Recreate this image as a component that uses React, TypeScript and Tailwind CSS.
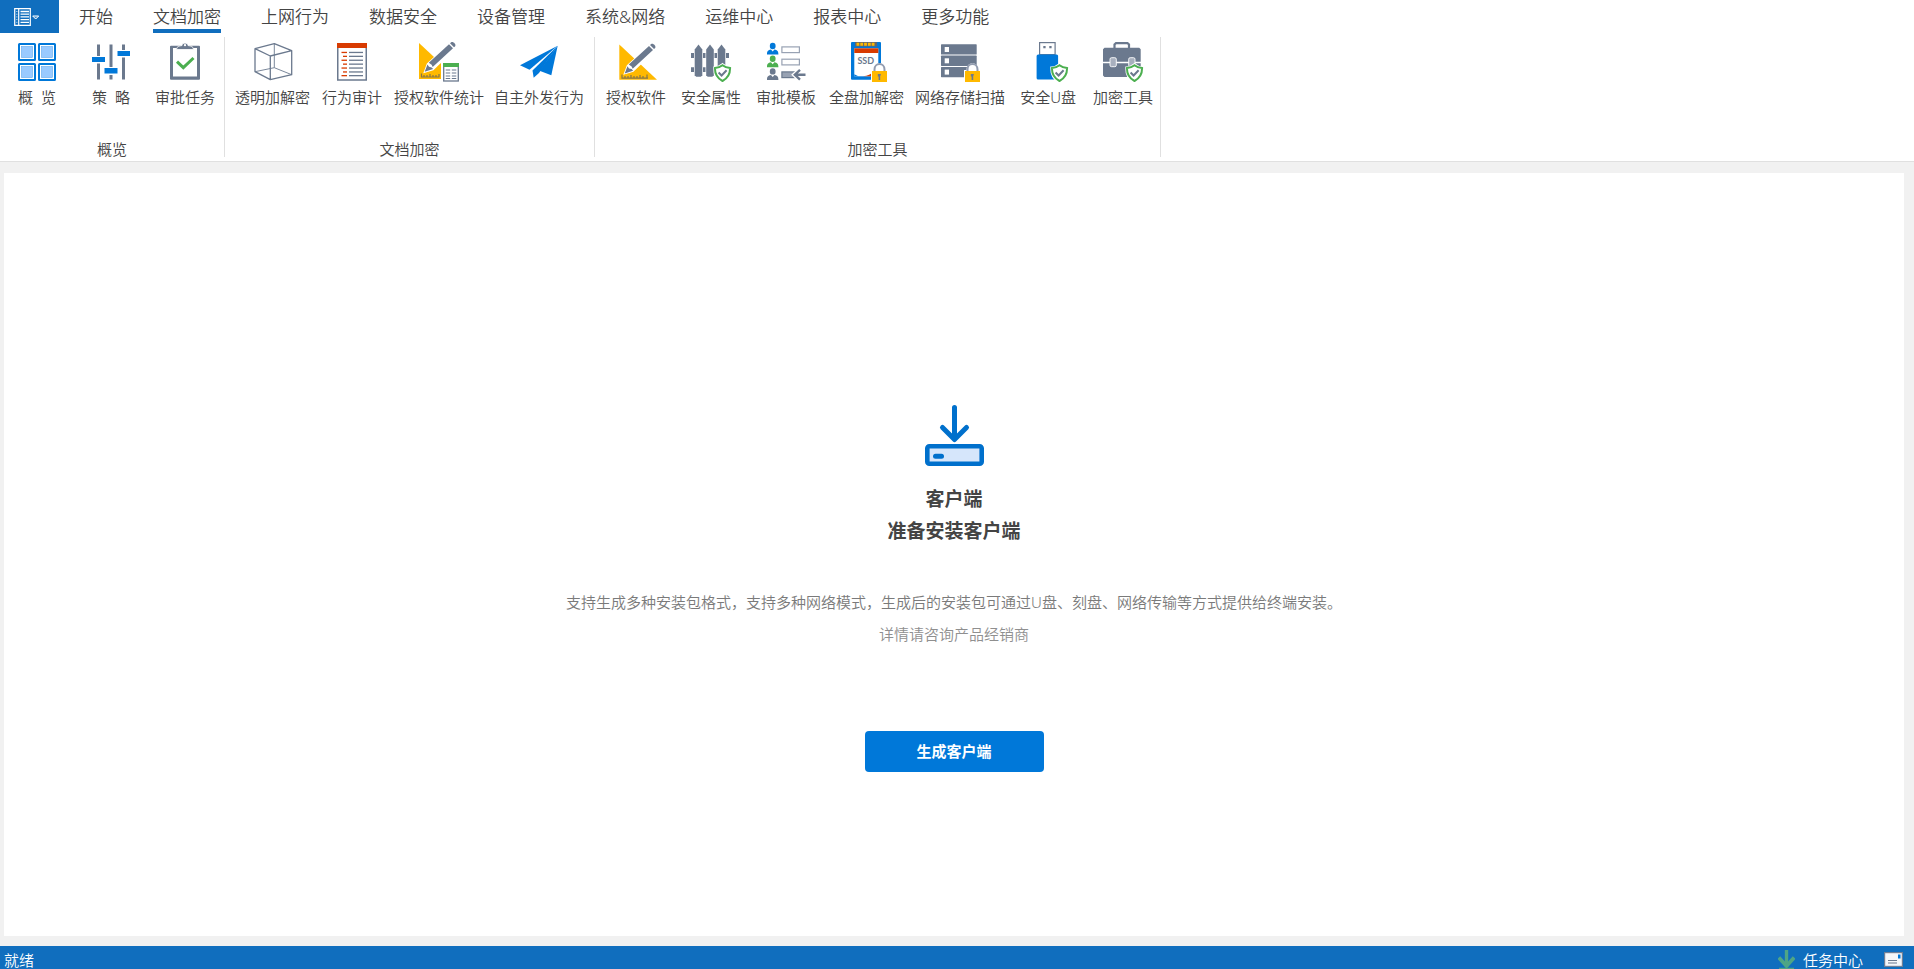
import type { ReactNode } from 'react';

const SLATE = '#6b798e';
const BLUE = '#0078d9';
const GREEN = '#4caf50';
const YELLOW = '#ffb900';
const RED = '#d83b01';

function Icon({ children }: { children: ReactNode }) {
  return (
    <svg viewBox="0 0 40 40" className="h-10 w-10 overflow-visible" aria-hidden="true">
      {children}
    </svg>
  );
}

function ShieldBadge() {
  return (
    <g>
      <path d="M31.5 22.5c2.4 2.1 4.9 3 8 3.2.2 6.500-1.700 11.200-8 14.300-6.300-3.100-8.200-7.800-8-14.300 3.100-.2 5.600-1.100 8-3.200z" fill="#fff" stroke="#fff" strokeWidth="2.500" />
      <path d="M31.5 23.200c2.300 1.800 4.600 2.600 7.600 2.900 0 5.900-1.900 10.100-7.600 12.900-5.700-2.800-7.600-7-7.600-12.900 3-.3 5.300-1.100 7.600-2.900z" fill="#fff" stroke={GREEN} strokeWidth="2" />
      <path d="M27.600 30.500l3 3 5-5.200" fill="none" stroke={SLATE} strokeWidth="2" />
    </g>
  );
}

function LockBadge() {
  return (
    <g>
      <path d="M24 41V28h2.500c0-9 12-9 12 0H41v13z" fill="#fff" />
      <path d="M27.500 29v-1.500c0-7.300 10-7.300 10 0V29" fill="none" stroke="#929caf" strokeWidth="2" />
      <rect x="25" y="29" width="15" height="11" fill={YELLOW} />
      <path d="M30.800 32h3v1.500h-.6V38h-1.600v-3.500h-.8z" fill={SLATE} />
    </g>
  );
}

function Pencil() {
  return (
    <g>
      <path d="M5.500 30l3-8L33 -.5l5 4.800L14 27.500z" fill="#fff" stroke="#fff" strokeWidth="1.500" />
      <path d="M5.700 29.700l2.800-7.200 1.500 2.300 2.600.6 1.500 1.600z" fill={SLATE} />
      <path d="M9.800 20.800L30 2.200l4 4.100-20.300 18.800-1.100-2.400z" fill={SLATE} />
      <path d="M31 1.300l1.200-1c1.900-1 5.100 1.900 4 4l-1.200 1z" fill={SLATE} />
    </g>
  );
}

function OverviewIcon() {
  return (
    <Icon>
      {[1, 21].map((y) =>
        [1, 21].map((x) => (
          <g key={`${x}-${y}`}>
            <rect x={x + 1} y={y + 1} width="16" height="16" rx=".5" fill="#fff" stroke={BLUE} strokeWidth="2" />
            <rect x={x + 3.500} y={y + 3.500} width="11" height="11" fill="#99caff" stroke="#60abed" strokeWidth=".6" />
          </g>
        )),
      )}
    </Icon>
  );
}

function PolicyIcon() {
  return (
    <Icon>
      <path
        d="M6 2.500h3V14H6zM6 21.500h3v16H6zM18.500 2.500h3V25h-3zM18.500 33h3v4.500h-3zM31 2.500h3V8h-3zM31 15.500h3v22h-3z"
        fill={SLATE}
      />
      <g fill={BLUE}>
        <rect x="1" y="15" width="13" height="5" />
        <rect x="13.500" y="26" width="13" height="5.500" />
        <rect x="26.500" y="9" width="12.500" height="5" />
      </g>
    </Icon>
  );
}

function ApprovalIcon() {
  return (
    <Icon>
      <path fillRule="evenodd" d="M6 3.700h28a1 1 0 011 1v32a1 1 0 01-1 1H6a1 1 0 01-1-1v-32a1 1 0 011-1zM8 6v28.500h24V6z" fill={SLATE} />
      <path d="M11.500 7.500c0-3 2.500-3.500 5.500-4 .5-3.200 5.500-3.200 6 0 3 .5 5.500 1 5.500 4z" fill={SLATE} stroke="#fff" strokeWidth=".8" />
      <circle cx="20" cy="3.200" r="1.100" fill="#fff" />
      <path d="M12 19.700l6.300 6L28.500 16" fill="none" stroke={GREEN} strokeWidth="3" />
    </Icon>
  );
}

function CubeIcon() {
  return (
    <Icon>
      <g fill="none" stroke={SLATE} strokeWidth="1.300" strokeLinejoin="round">
        <path d="M2 6.700l19.300-5 17.400 7-21.400 5.300zM2 6.700v23l15.300 8 21.400-5v-24M17.300 14v23.700" />
        <path d="M21.300 1.700v24M2 29.700l19.300-4 17.400 7" strokeWidth=".9" />
      </g>
    </Icon>
  );
}

function AuditIcon() {
  return (
    <Icon>
      <rect x="5.750" y="2" width="28.500" height="36" fill="#fff" stroke={SLATE} strokeWidth="1.500" />
      <rect x="5" y="1" width="30" height="5" fill={RED} />
      {[10.300, 14.200, 18.100, 22, 25.900, 29.800, 33.500].map((y, i) => (
        <g key={y}>
          <rect x={i % 2 ? 11 : 9.500} y={y - 0.500} width={i % 2 ? 4 : 5.500} height="1.300" fill={RED} />
          <rect x="17" y={y - 0.500} width="14" height="1.300" fill={SLATE} />
        </g>
      ))}
    </Icon>
  );
}

function SoftwareStatsIcon() {
  return (
    <Icon>
      <path d="M0 1l22 20.500V37H0z" fill={YELLOW} />
      <path d="M2.500 31.500v3.500h18M5 33v2M8 33v2M11 32v3M14 33v2M17 33v2M20 32v3" fill="none" stroke="#857649" strokeWidth="1.200" />
      <Pencil />
      <rect x="23" y="20" width="18" height="21" fill="#fff" />
      <rect x="24.700" y="22" width="14.600" height="17" fill="#fff" stroke={SLATE} strokeWidth="1.300" />
      <rect x="24" y="21" width="16" height="4" fill={GREEN} />
      <path d="M26.700 28h4.500M26.700 31h4.500M26.700 34h4.500M26.700 36.500h4.500M32.800 28h4.500M32.800 31h4.500M32.800 34h4.500M32.800 36.500h4.500" stroke={SLATE} strokeWidth="1.100" />
    </Icon>
  );
}

function PlaneIcon() {
  return (
    <Icon>
      <path d="M38.700 3.700L1 23.300l9.500 4.400z" fill={BLUE} />
      <path d="M38.700 3.700L13.500 28.500 14.700 35.700 20 31z" fill={BLUE} />
      <path d="M38.700 3.700L20.500 28.800l11.800 4.500z" fill={BLUE} />
    </Icon>
  );
}

function SoftwareIcon() {
  return (
    <Icon>
      <path d="M3.300 2.500L41 37.700H3.300z" fill={YELLOW} />
      <path d="M6 32.500v3.700h26M9 34v2M12 34v2M15 33v3M18 34v2M21 34v2M24 33v3M27 34v2M31 32.500v3.500" fill="none" stroke="#857649" strokeWidth="1.200" />
      <g transform="translate(3 1.700)">
        <Pencil />
      </g>
    </Icon>
  );
}

function FenceIcon() {
  return (
    <Icon>
      <path d="M0 11h38v5H0zM0 25.300h38v4.700H0z" fill={SLATE} />
      {[3.700, 15.200, 26.700].map((x) => (
        <path
          key={x}
          d={`M${x} 33.200V7.500L${x + 3.800} 2.600L${x + 7.600} 7.500V33.200L${x + 6.100} 34.700H${x + 1.500}Z`}
          fill={SLATE}
          stroke="#fff"
          strokeWidth="1.400"
          paintOrder="stroke"
        />
      ))}
      <ShieldBadge />
    </Icon>
  );
}

function TemplateIcon() {
  return (
    <Icon>
      {[BLUE, GREEN, SLATE].map((color, i) => (
        <g key={color} fill={color} transform={`translate(0 ${i * 12.700})`}>
          <ellipse cx="6.700" cy="4" rx="2.900" ry="3.200" />
          <path d="M1 12.500c0-3.500 1-4.500 4-5l1.700 2 1.700-2c3 .5 4 1.500 4 5z" />
        </g>
      ))}
      <rect x="15.900" y="4.900" width="17.500" height="5.700" fill="#fff" stroke="#98a2b3" strokeWidth="1.200" />
      <rect x="15.900" y="17.200" width="17.500" height="5.700" fill="#fff" stroke="#98a2b3" strokeWidth="1.200" />
      <rect x="15.900" y="29.900" width="17.500" height="5.700" fill="#98a2b3" stroke={SLATE} strokeWidth="1.200" />
      <path d="M40 32.700H29M34.300 27.500l-5.500 5.200 5.500 5.200" fill="none" stroke="#fff" strokeWidth="5" />
      <path d="M39.500 32.700H29M34 27.800l-5.200 4.900 5.200 4.900" fill="none" stroke={SLATE} strokeWidth="2.400" />
    </Icon>
  );
}

function SsdIcon() {
  return (
    <Icon>
      <rect x="4" y="0" width="30" height="37.700" rx="1" fill={BLUE} />
      <rect x="8" y="0" width="22" height="4.500" fill="#5f6672" />
      <path d="M9.500 .8h2.800v3H9.500zM13.300 .8h2.800v3h-2.800zM17.100 .8h2.800v3h-2.800zM20.900 .8h2.800v3h-2.800zM24.700 .8h2.800v3h-2.800z" fill={YELLOW} />
      <rect x="7.300" y="6.300" width="24" height="28" fill="#fff" />
      <rect x="7.300" y="6.300" width="24" height="4.700" fill={RED} />
      <path d="M16 34.300c5-.5 8-2 10-4.300v4.300z" fill={RED} />
      <path d="M7.300 34.300v-2l4 2z" fill={BLUE} />
      <text x="18.800" y="21.700" textAnchor="middle" fontSize="9" fontWeight="700" fontFamily="Lato, sans-serif" fill={SLATE}>
        SSD
      </text>
      <LockBadge />
    </Icon>
  );
}

function StorageIcon() {
  return (
    <Icon>
      {[2.300, 13.600, 24.900].map((y) => (
        <g key={y}>
          <rect x="1" y={y} width="35.700" height="10.300" rx=".6" fill={SLATE} />
          <rect x="4.700" y={y + 2.700} width="4.300" height="5" fill="#fff" />
        </g>
      ))}
      <LockBadge />
    </Icon>
  );
}

function UsbIcon() {
  return (
    <Icon>
      <rect x="11.600" y=".6" width="15.500" height="12" fill="#fff" stroke={SLATE} strokeWidth="1.200" />
      <path d="M15.300 4h2.300v2.300h-2.300zM21.300 4h2.300v2.300h-2.300z" fill={SLATE} />
      <rect x="8.600" y="12.500" width="21.500" height="25" rx="1.500" fill={BLUE} />
      <ShieldBadge />
    </Icon>
  );
}

function ToolboxIcon() {
  return (
    <Icon>
      <path d="M11.500 6V2.500L13 1.200h11.500L26 2.500V6" fill="none" stroke={SLATE} strokeWidth="2.200" />
      <path d="M1.500 5.700h34.700l1.500 1.500v12.600H0V7.200zM0 21.200h37.700v12.300L36.200 35H1.500L0 33.500z" fill={SLATE} />
      <rect x="7" y="15.700" width="6.300" height="9" rx="1.500" fill="#a8b0be" stroke="#fff" strokeWidth=".9" />
      <rect x="25.700" y="15.700" width="6.300" height="9" rx="1.500" fill="#a8b0be" stroke="#fff" strokeWidth=".9" />
      <ShieldBadge />
    </Icon>
  );
}

function InstallIcon() {
  return (
    <svg viewBox="0 0 59 61" className="h-[61px] w-[59px]" aria-hidden="true">
      <g fill="none" stroke="#0070cc" strokeLinecap="round" strokeLinejoin="round">
        <path d="M29.500 2.500V34M17.500 22.500l12 12 12-12" strokeWidth="5" />
        <rect x="2.300" y="41.300" width="54.400" height="17.400" rx="2" fill="#d6e6fb" strokeWidth="4.600" />
        <path d="M10.500 51.300h6" strokeWidth="5" />
      </g>
    </svg>
  );
}

const tabs = ['开始', '文档加密', '上网行为', '数据安全', '设备管理', '系统&网络', '运维中心', '报表中心', '更多功能'];

const groups = [
  {
    title: '概览',
    className: 'pr-[2px]',
    items: [
      { label: '概  览', icon: <OverviewIcon /> },
      { label: '策  略', icon: <PolicyIcon /> },
      { label: '审批任务', icon: <ApprovalIcon /> },
    ],
  },
  {
    title: '文档加密',
    className: 'px-[5px]',
    items: [
      { label: '透明加解密', icon: <CubeIcon /> },
      { label: '行为审计', icon: <AuditIcon /> },
      { label: '授权软件统计', icon: <SoftwareStatsIcon /> },
      { label: '自主外发行为', icon: <PlaneIcon /> },
    ],
  },
  {
    title: '加密工具',
    className: 'gap-px pl-1',
    items: [
      { label: '授权软件', icon: <SoftwareIcon /> },
      { label: '安全属性', icon: <FenceIcon /> },
      { label: '审批模板', icon: <TemplateIcon /> },
      { label: '全盘加解密', icon: <SsdIcon /> },
      { label: '网络存储扫描', icon: <StorageIcon /> },
      { label: '安全U盘', icon: <UsbIcon /> },
      { label: '加密工具', icon: <ToolboxIcon /> },
    ],
  },
];

function TabBar() {
  return (
    <div className="flex h-[33px] bg-white">
      <button type="button" aria-label="菜单" className="flex w-[59px] items-center bg-[#106ebe] pl-[14px]">
        <svg viewBox="0 0 26 18" className="h-[18px] w-[26px]" fill="none" aria-hidden="true">
          <path d="M.7 .7h15.600v16.600H.7zM4.700 .7v16.600" stroke="#fff" strokeWidth="1.200" />
          <path d="M6.500 3.500h8.500M6.500 6.200h8.500M6.500 8.900h8.500M6.500 11.600h8.500M6.500 14.300h8.500" stroke="#fff" strokeWidth="1.300" />
          <path d="M2 3.500h1.500M2 6.200h1.500M2 8.900h1.500M2 11.600h1.500M2 14.300h1.500" stroke="#9cc4e6" strokeWidth="1" />
          <path d="M18.700 8h6l-3 3z" fill="#3f8bcb" stroke="#fff" strokeWidth="1" />
        </svg>
      </button>
      <nav className="flex">
        {tabs.map((tab) => (
          <button key={tab} type="button" className="flex px-5 text-[17px]">
            <span
              className={
                tab === '文档加密'
                  ? 'h-full border-b-4 border-[#106ebe] leading-[33px]'
                  : 'h-full border-b-4 border-transparent leading-[33px]'
              }
            >
              {tab}
            </span>
          </button>
        ))}
      </nav>
    </div>
  );
}

function Ribbon() {
  return (
    <div className="flex border-b border-[#e0e0e0] bg-white py-1">
      {groups.map((group) => (
        <section key={group.title} className="flex h-[120px] flex-col justify-between border-r border-[#e0e0e0]">
          <div className={`flex ${group.className}`}>
            {group.items.map((item) => (
              <button
                key={item.label}
                type="button"
                className="flex min-w-[74px] flex-col items-center gap-[5px] px-[5px] pt-[5px] text-[15px] leading-5 whitespace-pre"
              >
                {item.icon}
                {item.label}
              </button>
            ))}
          </div>
          <div className="text-center text-[15px] leading-4">{group.title}</div>
        </section>
      ))}
    </div>
  );
}

function StatusBar() {
  return (
    <footer className="flex h-[23px] items-start justify-between overflow-hidden bg-[#106ebe] pr-[11px] pl-1 text-[15px] leading-[18px] text-white">
      <span className="pt-[5px]">就绪</span>
      <div className="flex items-start">
        <button type="button" className="flex items-start gap-2">
          <svg viewBox="0 0 17 20" className="mt-1 h-5 w-[17px]" fill="none" stroke="#4fa585" aria-hidden="true">
            <path d="M8.500 0v17" strokeWidth="3.400" />
            <path d="M.8 7.500l7.700 8.500 7.700-8.500" strokeWidth="3.800" />
            <path d="M1 18.500h15" strokeWidth="1.500" />
          </svg>
          <span className="pt-[5px]">任务中心</span>
        </button>
        <button type="button" aria-label="消息" className="ml-[21px] pt-[6px]">
          <svg viewBox="0 0 19 15" className="h-[15px] w-[19px]" aria-hidden="true">
            <rect x=".6" y=".6" width="17.800" height="13.800" fill="#f5f7fa" stroke="#6f7f96" strokeWidth="1.200" />
            <rect x="14" y="2.500" width="2.500" height="4" fill="#0078d9" />
            <path d="M4 8.500h9M4 11h9" stroke="#6b798e" strokeWidth="1.200" />
          </svg>
        </button>
      </div>
    </footer>
  );
}

export default function App() {
  return (
    <div className="flex min-h-screen flex-col bg-[#f1f1f1] font-['Noto_Sans','Noto_Sans_CJK_SC',sans-serif] font-[350] text-[#444]">
      <header>
        <TabBar />
        <Ribbon />
      </header>
      <main className="mt-[11px] mr-[10px] mb-[10px] ml-1 flex flex-1 flex-col items-center justify-center bg-white pt-[68px]">
        <InstallIcon />
        <h1 className="mt-[17px] text-center text-[19px] leading-8 font-bold">
          客户端
          <br />
          准备安装客户端
        </h1>
        <p className="mt-[39px] text-[15px] leading-8 text-[#7a7a7a]">
          支持生成多种安装包格式，支持多种网络模式，生成后的安装包可通过U盘、刻盘、网络传输等方式提供给终端安装。
        </p>
        <p className="text-[15px] leading-8 text-[#8f8f8f]">详情请咨询产品经销商</p>
        <button type="button" className="mt-[81px] h-[41px] w-[179px] rounded bg-[#0078d9] text-[15px] font-bold text-white">
          生成客户端
        </button>
      </main>
      <StatusBar />
    </div>
  );
}
